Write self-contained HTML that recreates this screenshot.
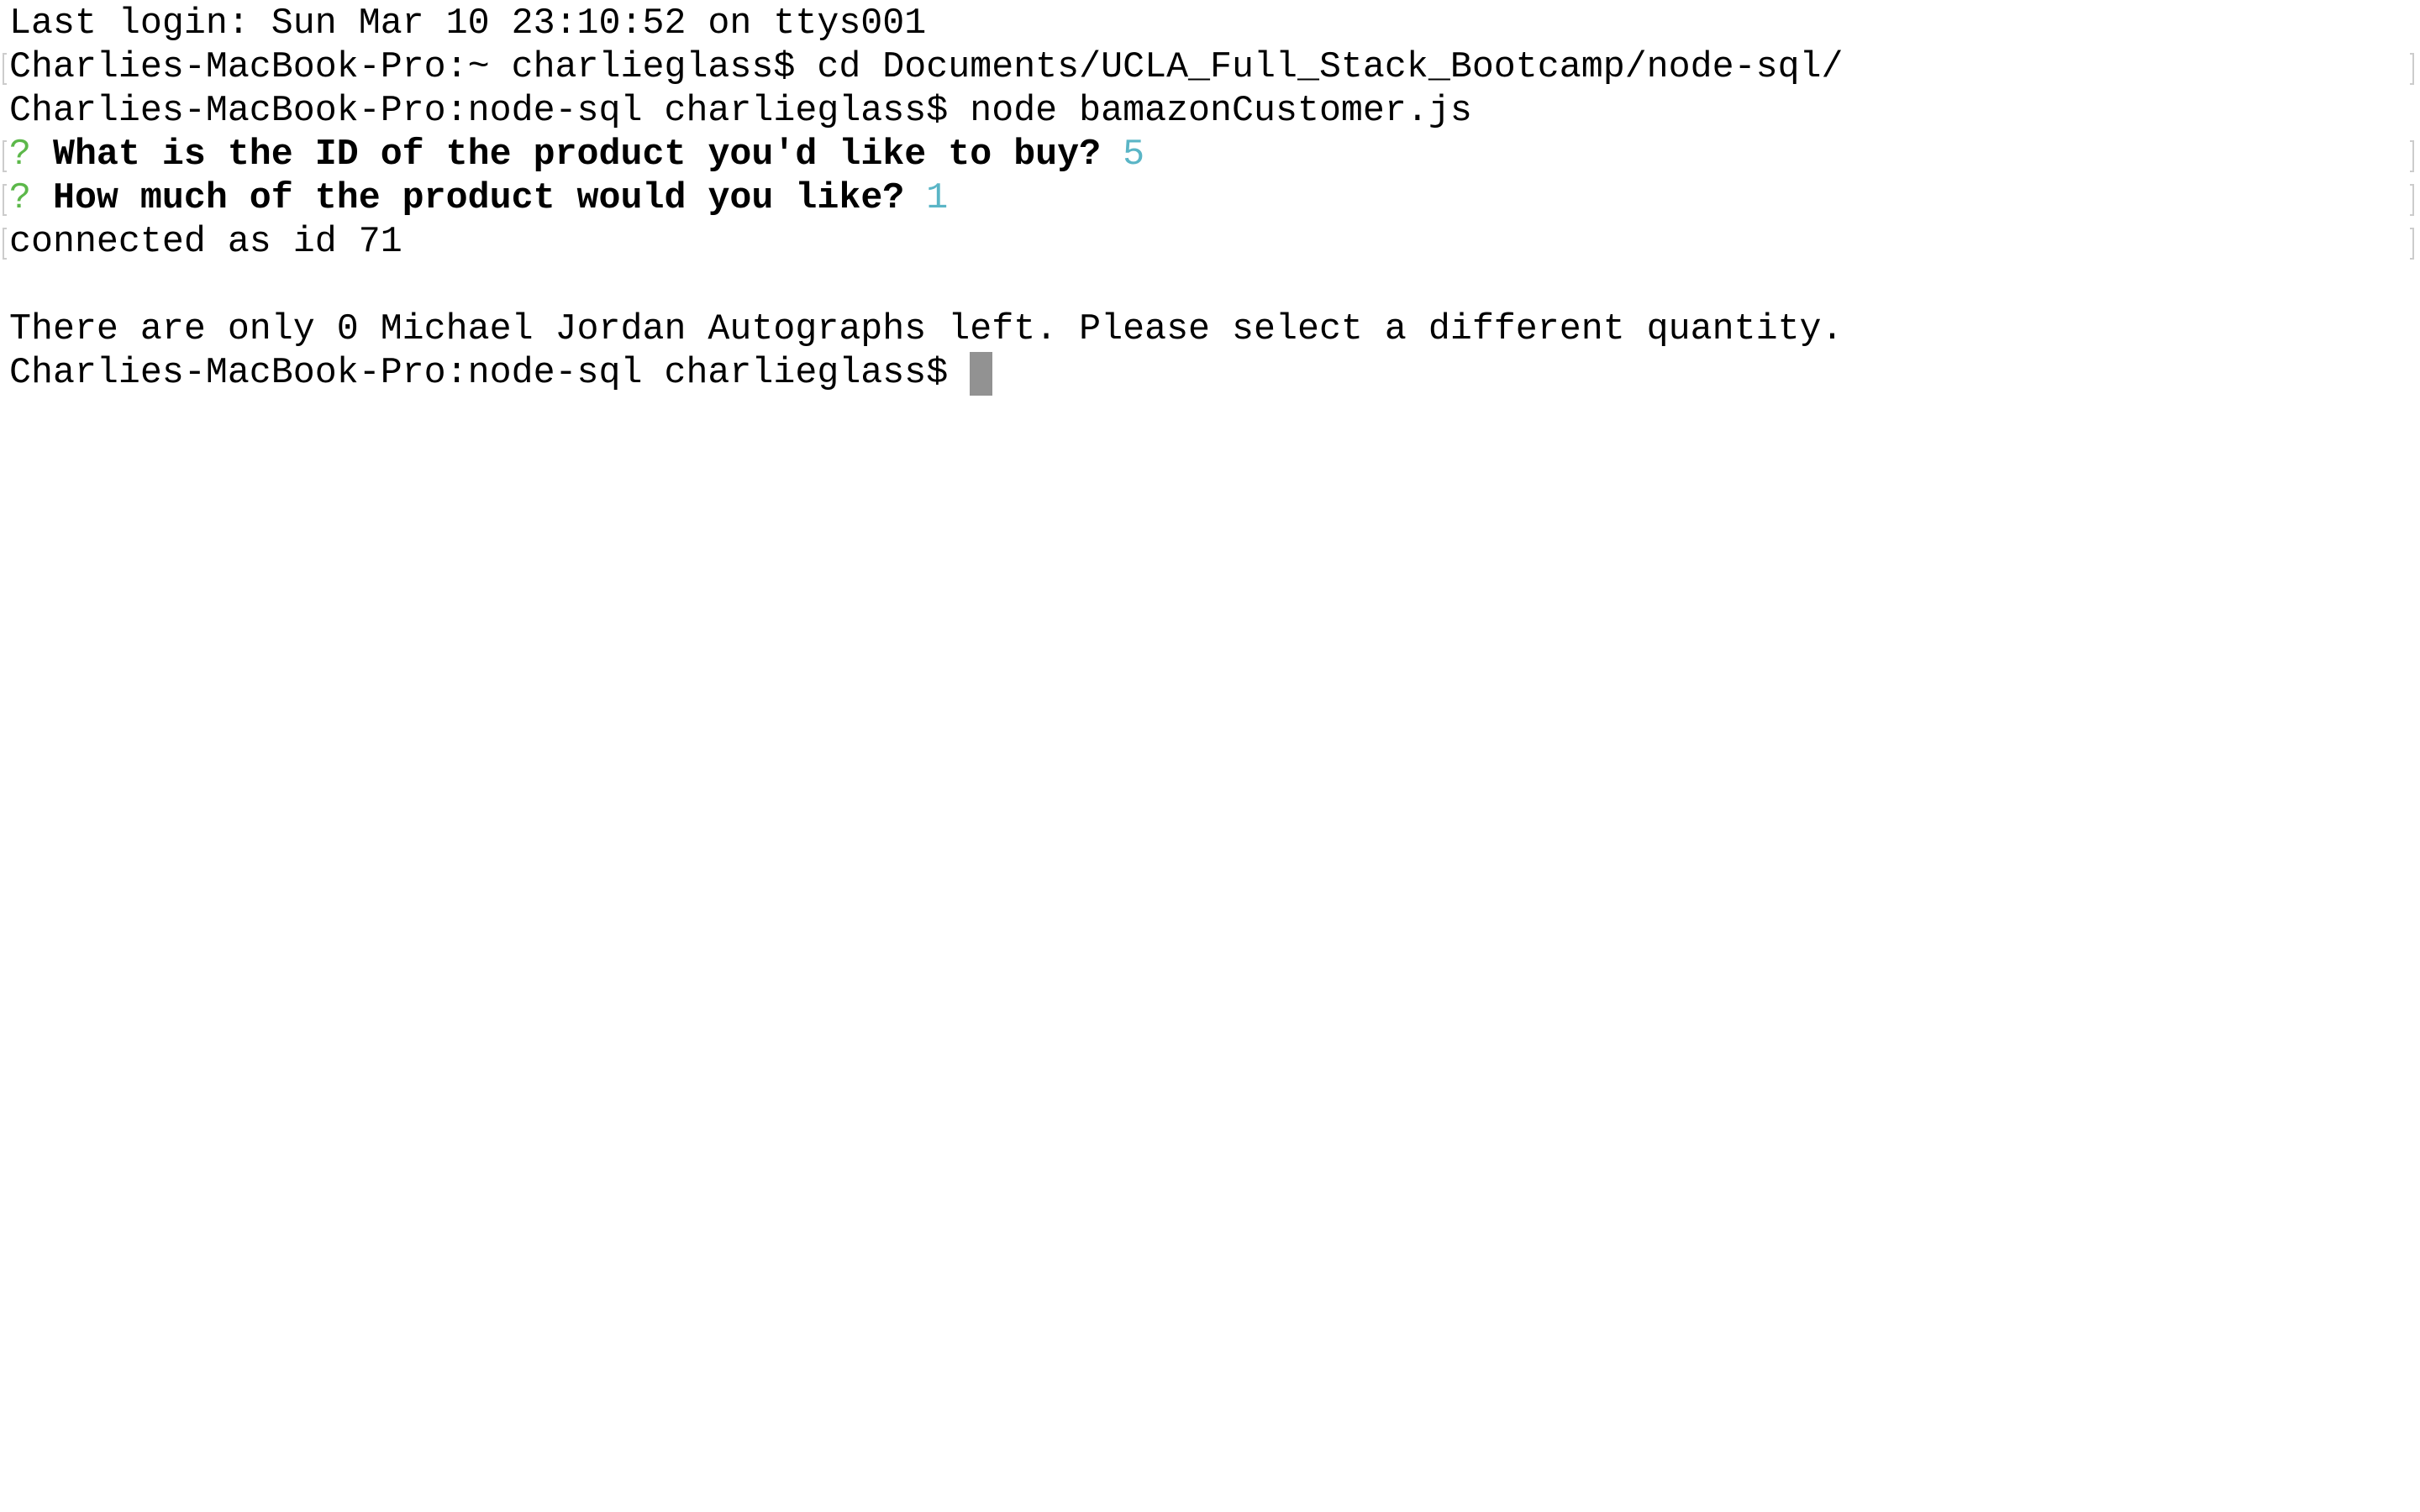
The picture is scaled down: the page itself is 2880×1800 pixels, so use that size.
<!DOCTYPE html>
<html><head><meta charset="utf-8"><style>
html,body{margin:0;padding:0;background:#fff;width:2880px;height:1800px;overflow:hidden}
.t{position:absolute;left:11px;top:3px;font-family:"Liberation Mono",monospace;font-size:43.3px;line-height:52px;color:#000;white-space:pre}
.l{height:52px}
b{font-weight:bold}
.g{color:#5cb84a}.c{color:#5ab5c6}
.cur{display:inline-block;width:27px;height:52px;background:#929292;vertical-align:top}
.m{position:absolute;width:3px;height:34px;border:2px solid #ccc;border-right:none}
.r{position:absolute;width:3px;height:34px;border:2px solid #ccc;border-left:none}
</style></head><body>
<div class="m" style="left:3px;top:63px"></div><div class="r" style="left:2868px;top:63px"></div>
<div class="m" style="left:3px;top:167px"></div><div class="r" style="left:2868px;top:167px"></div>
<div class="m" style="left:3px;top:219px"></div><div class="r" style="left:2868px;top:219px"></div>
<div class="m" style="left:3px;top:271px"></div><div class="r" style="left:2868px;top:271px"></div>
<div class="t"><div class="l">Last login: Sun Mar 10 23:10:52 on ttys001</div><div class="l">Charlies-MacBook-Pro:~ charlieglass$ cd Documents/UCLA_Full_Stack_Bootcamp/node-sql/</div><div class="l">Charlies-MacBook-Pro:node-sql charlieglass$ node bamazonCustomer.js</div><div class="l"><span class="g">?</span> <b>What is the ID of the product you'd like to buy?</b> <span class="c">5</span></div><div class="l"><span class="g">?</span> <b>How much of the product would you like?</b> <span class="c">1</span></div><div class="l">connected as id 71</div><div class="l"> </div><div class="l">There are only 0 Michael Jordan Autographs left. Please select a different quantity.</div><div class="l">Charlies-MacBook-Pro:node-sql charlieglass$ <span class="cur"></span></div></div>
</body></html>
